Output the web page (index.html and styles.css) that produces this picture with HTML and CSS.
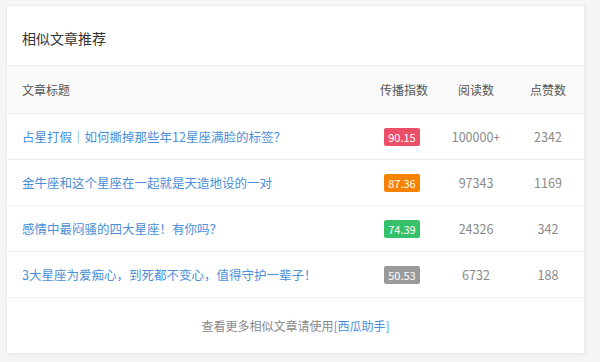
FILE: index.html
```html
<!DOCTYPE html>
<html lang="zh">
<head>
<meta charset="utf-8">
<link rel="stylesheet" href="styles.css">
</head>
<body>
<div class="card">
  <div class="card-title">相似文章推荐</div>
  <div class="row head">
    <div class="c-title">文章标题</div>
    <div class="c">传播指数</div>
    <div class="c">阅读数</div>
    <div class="c">点赞数</div>
  </div>
  <div class="row">
    <div class="c-title"><a class="link">占星打假｜如何撕掉那些年12星座满脸的标签？</a></div>
    <div class="c"><span class="badge red">90.15</span></div>
    <div class="c num">100000+</div>
    <div class="c num">2342</div>
  </div>
  <div class="row">
    <div class="c-title"><a class="link">金牛座和这个星座在一起就是天造地设的一对</a></div>
    <div class="c"><span class="badge orange">87.36</span></div>
    <div class="c num">97343</div>
    <div class="c num">1169</div>
  </div>
  <div class="row">
    <div class="c-title"><a class="link">感情中最闷骚的四大星座！有你吗？</a></div>
    <div class="c"><span class="badge green">74.39</span></div>
    <div class="c num">24326</div>
    <div class="c num">342</div>
  </div>
  <div class="row">
    <div class="c-title"><a class="link">3大星座为爱痴心，到死都不变心，值得守护一辈子！</a></div>
    <div class="c"><span class="badge gray">50.53</span></div>
    <div class="c num">6732</div>
    <div class="c num">188</div>
  </div>
  <div class="footer">查看更多相似文章请使用<a class="link">[西瓜助手]</a></div>
</div>
</body>
</html>
```
FILE: styles.css
```css
html, body {
  margin: 0;
  padding: 0;
}
body {
  background: #f5f5f5;
  font-family: "Noto Sans CJK SC", "Noto Sans", sans-serif;
  width: 600px;
  height: 362px;
  padding: 5px 0 0 6px;
  box-sizing: border-box;
}
.card {
  width: 579px;
  background: #fff;
  border: 1px solid #ececec;
  box-sizing: border-box;
  box-shadow: 1px 1px 3px rgba(0,0,0,0.04);
}
.card-title {
  height: 59px;
  line-height: 64px;
  padding-left: 15px;
  font-size: 14px;
  color: #333;
  border-bottom: 1px solid #eee;
}
.row {
  display: grid;
  grid-template-columns: 1fr 72px 72px 72px;
  align-items: center;
  height: 45px;
  padding-left: 15px;
  border-bottom: 1px solid #eee;
  font-size: 12.5px;
}
.row.head {
  height: 47px;
  background: #fafafa;
  color: #555;
  font-size: 12px;
}
.c {
  text-align: center;
}
.num {
  color: #8a8a8a;
}
.link {
  color: #4a8fd8;
  text-decoration: none;
}
.badge {
  display: inline-block;
  height: 18px;
  line-height: 18px;
  padding: 0 4px;
  margin-right: 4px;
  border-radius: 2px;
  color: #fff;
  font-size: 11px;
}
.red { background: #ec5068; }
.orange { background: #f58300; }
.green { background: #34c16a; }
.gray { background: #9a9a9a; }
.footer {
  height: 55px;
  line-height: 56px;
  text-align: center;
  font-size: 12px;
  color: #888;
}
```
